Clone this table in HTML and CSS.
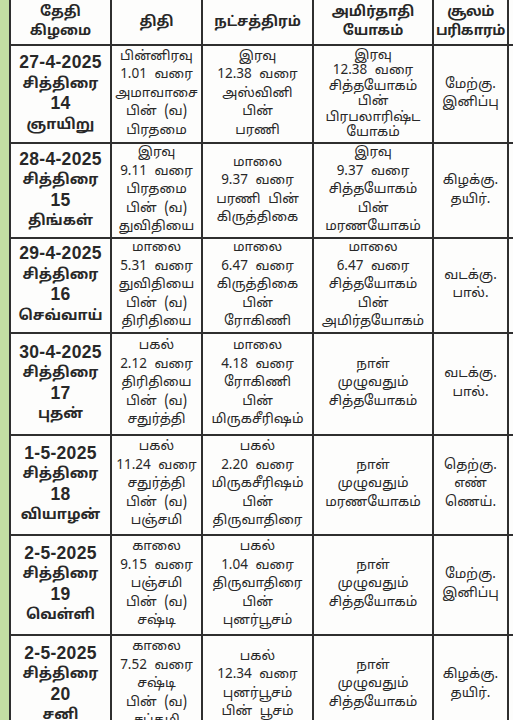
FILE: index.html
```html
<!DOCTYPE html>
<html lang="ta">
<head>
<meta charset="utf-8">
<title>பஞ்சாங்கம்</title>
<link rel="stylesheet" href="styles.css">
</head>
<body>
<div class="page">
  <div class="strip"></div>
  <table class="cal">
    <colgroup>
      <col class="c-date"><col class="c-tithi"><col class="c-star"><col class="c-yoga"><col class="c-soolam"><col class="c-extra">
    </colgroup>
    <thead>
      <tr class="r-head">
        <th>தேதி<br>கிழமை</th>
        <th>திதி</th>
        <th>நட்சத்திரம்</th>
        <th>அமிர்தாதி<br>யோகம்</th>
        <th class="narrow">சூலம்<br>பரிகாரம்</th>
        <th></th>
      </tr>
    </thead>
    <tbody>
      <tr class="r1">
        <td class="date"><span class="num">27-4-2025</span><br>சித்திரை<br><span class="num">14</span><br>ஞாயிறு</td>
        <td>பின்னிரவு<br>1.01 வரை<br>அமாவாசை<br>பின் (வ)<br>பிரதமை</td>
        <td>இரவு<br>12.38 வரை<br>அஸ்வினி<br>பின்<br>பரணி</td>
        <td class="tight">இரவு<br>12.38 வரை<br>சித்தயோகம்<br>பின்<br>பிரபலாரிஷ்ட<br>யோகம்</td>
        <td>மேற்கு.<br>இனிப்பு</td>
        <td class="extra"></td>
      </tr>
      <tr class="r2">
        <td class="date"><span class="num">28-4-2025</span><br>சித்திரை<br><span class="num">15</span><br>திங்கள்</td>
        <td>இரவு<br>9.11 வரை<br>பிரதமை<br>பின் (வ)<br>துவிதியை</td>
        <td>மாலை<br>9.37 வரை<br>பரணி பின்<br>கிருத்திகை</td>
        <td>இரவு<br>9.37 வரை<br>சித்தயோகம்<br>பின்<br>மரணயோகம்</td>
        <td>கிழக்கு.<br>தயிர்.</td>
        <td class="extra"></td>
      </tr>
      <tr class="r3">
        <td class="date"><span class="num">29-4-2025</span><br>சித்திரை<br><span class="num">16</span><br>செவ்வாய்</td>
        <td>மாலை<br>5.31 வரை<br>துவிதியை<br>பின் (வ)<br>திரிதியை</td>
        <td>மாலை<br>6.47 வரை<br>கிருத்திகை<br>பின்<br>ரோகிணி</td>
        <td>மாலை<br>6.47 வரை<br>சித்தயோகம்<br>பின்<br>அமிர்தயோகம்</td>
        <td>வடக்கு.<br>பால்.</td>
        <td class="extra"></td>
      </tr>
      <tr class="r4">
        <td class="date"><span class="num">30-4-2025</span><br>சித்திரை<br><span class="num">17</span><br>புதன்</td>
        <td>பகல்<br>2.12 வரை<br>திரிதியை<br>பின் (வ)<br>சதுர்த்தி</td>
        <td>மாலை<br>4.18 வரை<br>ரோகிணி<br>பின்<br>மிருகசீரிஷம்</td>
        <td>நாள்<br>முழுவதும்<br>சித்தயோகம்</td>
        <td>வடக்கு.<br>பால்.</td>
        <td class="extra"></td>
      </tr>
      <tr class="r5">
        <td class="date"><span class="num">1-5-2025</span><br>சித்திரை<br><span class="num">18</span><br>வியாழன்</td>
        <td>பகல்<br>11.24 வரை<br>சதுர்த்தி<br>பின் (வ)<br>பஞ்சமி</td>
        <td>பகல்<br>2.20 வரை<br>மிருகசீரிஷம்<br>பின்<br>திருவாதிரை</td>
        <td>நாள்<br>முழுவதும்<br>மரணயோகம்</td>
        <td>தெற்கு.<br>எண்<br>ணெய்.</td>
        <td class="extra"></td>
      </tr>
      <tr class="r6">
        <td class="date"><span class="num">2-5-2025</span><br>சித்திரை<br><span class="num">19</span><br>வெள்ளி</td>
        <td>காலை<br>9.15 வரை<br>பஞ்சமி<br>பின் (வ)<br>சஷ்டி</td>
        <td>பகல்<br>1.04 வரை<br>திருவாதிரை<br>பின்<br>புனர்பூசம்</td>
        <td>நாள்<br>முழுவதும்<br>சித்தயோகம்</td>
        <td>மேற்கு.<br>இனிப்பு</td>
        <td class="extra"></td>
      </tr>
      <tr class="r7">
        <td class="date"><span class="num">2-5-2025</span><br>சித்திரை<br><span class="num">20</span><br>சனி</td>
        <td>காலை<br>7.52 வரை<br>சஷ்டி<br>பின் (வ)<br>சப்தமி</td>
        <td>பகல்<br>12.34 வரை<br>புனர்பூசம்<br>பின் பூசம்</td>
        <td>நாள்<br>முழுவதும்<br>சித்தயோகம்</td>
        <td>கிழக்கு.<br>தயிர்.</td>
        <td class="extra"></td>
      </tr>
    </tbody>
  </table>
</div>
</body>
</html>
```

FILE: styles.css
```css
html, body {
  margin: 0;
  padding: 0;
  background: #ffffff;
}

.page {
  width: 513px;
  height: 720px;
  overflow: hidden;
  display: flex;
  align-items: flex-start;
  background: #fcfcfa;
}

.strip {
  flex: 0 0 9px;
  height: 720px;
  background: #c3dea3;
}

.cal {
  flex: 0 0 auto;
  border-collapse: collapse;
  table-layout: fixed;
  width: 560px;
  font-family: "Noto Sans Tamil", "Noto Sans Tamil UI", "Lohit Tamil", "Latha", "FreeSans", "Liberation Sans", sans-serif;
  color: #282828;
  background: #fdfdfc;
}

.c-date { width: 101px; }
.c-tithi { width: 91px; }
.c-star { width: 111px; }
.c-yoga { width: 120px; }
.c-soolam { width: 75px; }
.c-extra { width: 62px; }

.cal th,
.cal td {
  border: 2px solid #2f2f2f;
  text-align: center;
  vertical-align: middle;
  padding: 0 2px;
  font-size: 13.5px;
  line-height: 18.5px;
  word-spacing: 4px;
  white-space: nowrap;
  overflow: hidden;
}

.cal thead th {
  border-top: none;
  font-weight: bold;
  font-size: 14px;
  line-height: 19px;
  height: 44px;
  padding: 0;
}

.cal thead th.narrow {
  letter-spacing: -0.4px;
}

.cal td.date {
  font-weight: bold;
  font-size: 14.5px;
  line-height: 19.5px;
  word-spacing: 0;
}

.cal td.date .num {
  font-family: "Liberation Sans", Arial, sans-serif;
  font-size: 17.5px;
  letter-spacing: 0.3px;
}

.cal td.tight {
  line-height: 15.5px;
}

.cal td.extra {
  padding: 0;
}

.r1 td { height: 96px; }
.r2 td { height: 93px; }
.r3 td { height: 91px; }
.r4 td { height: 100px; }
.r5 td { height: 98px; }
.r6 td { height: 98px; }
.r7 td { height: 98px; }
```
